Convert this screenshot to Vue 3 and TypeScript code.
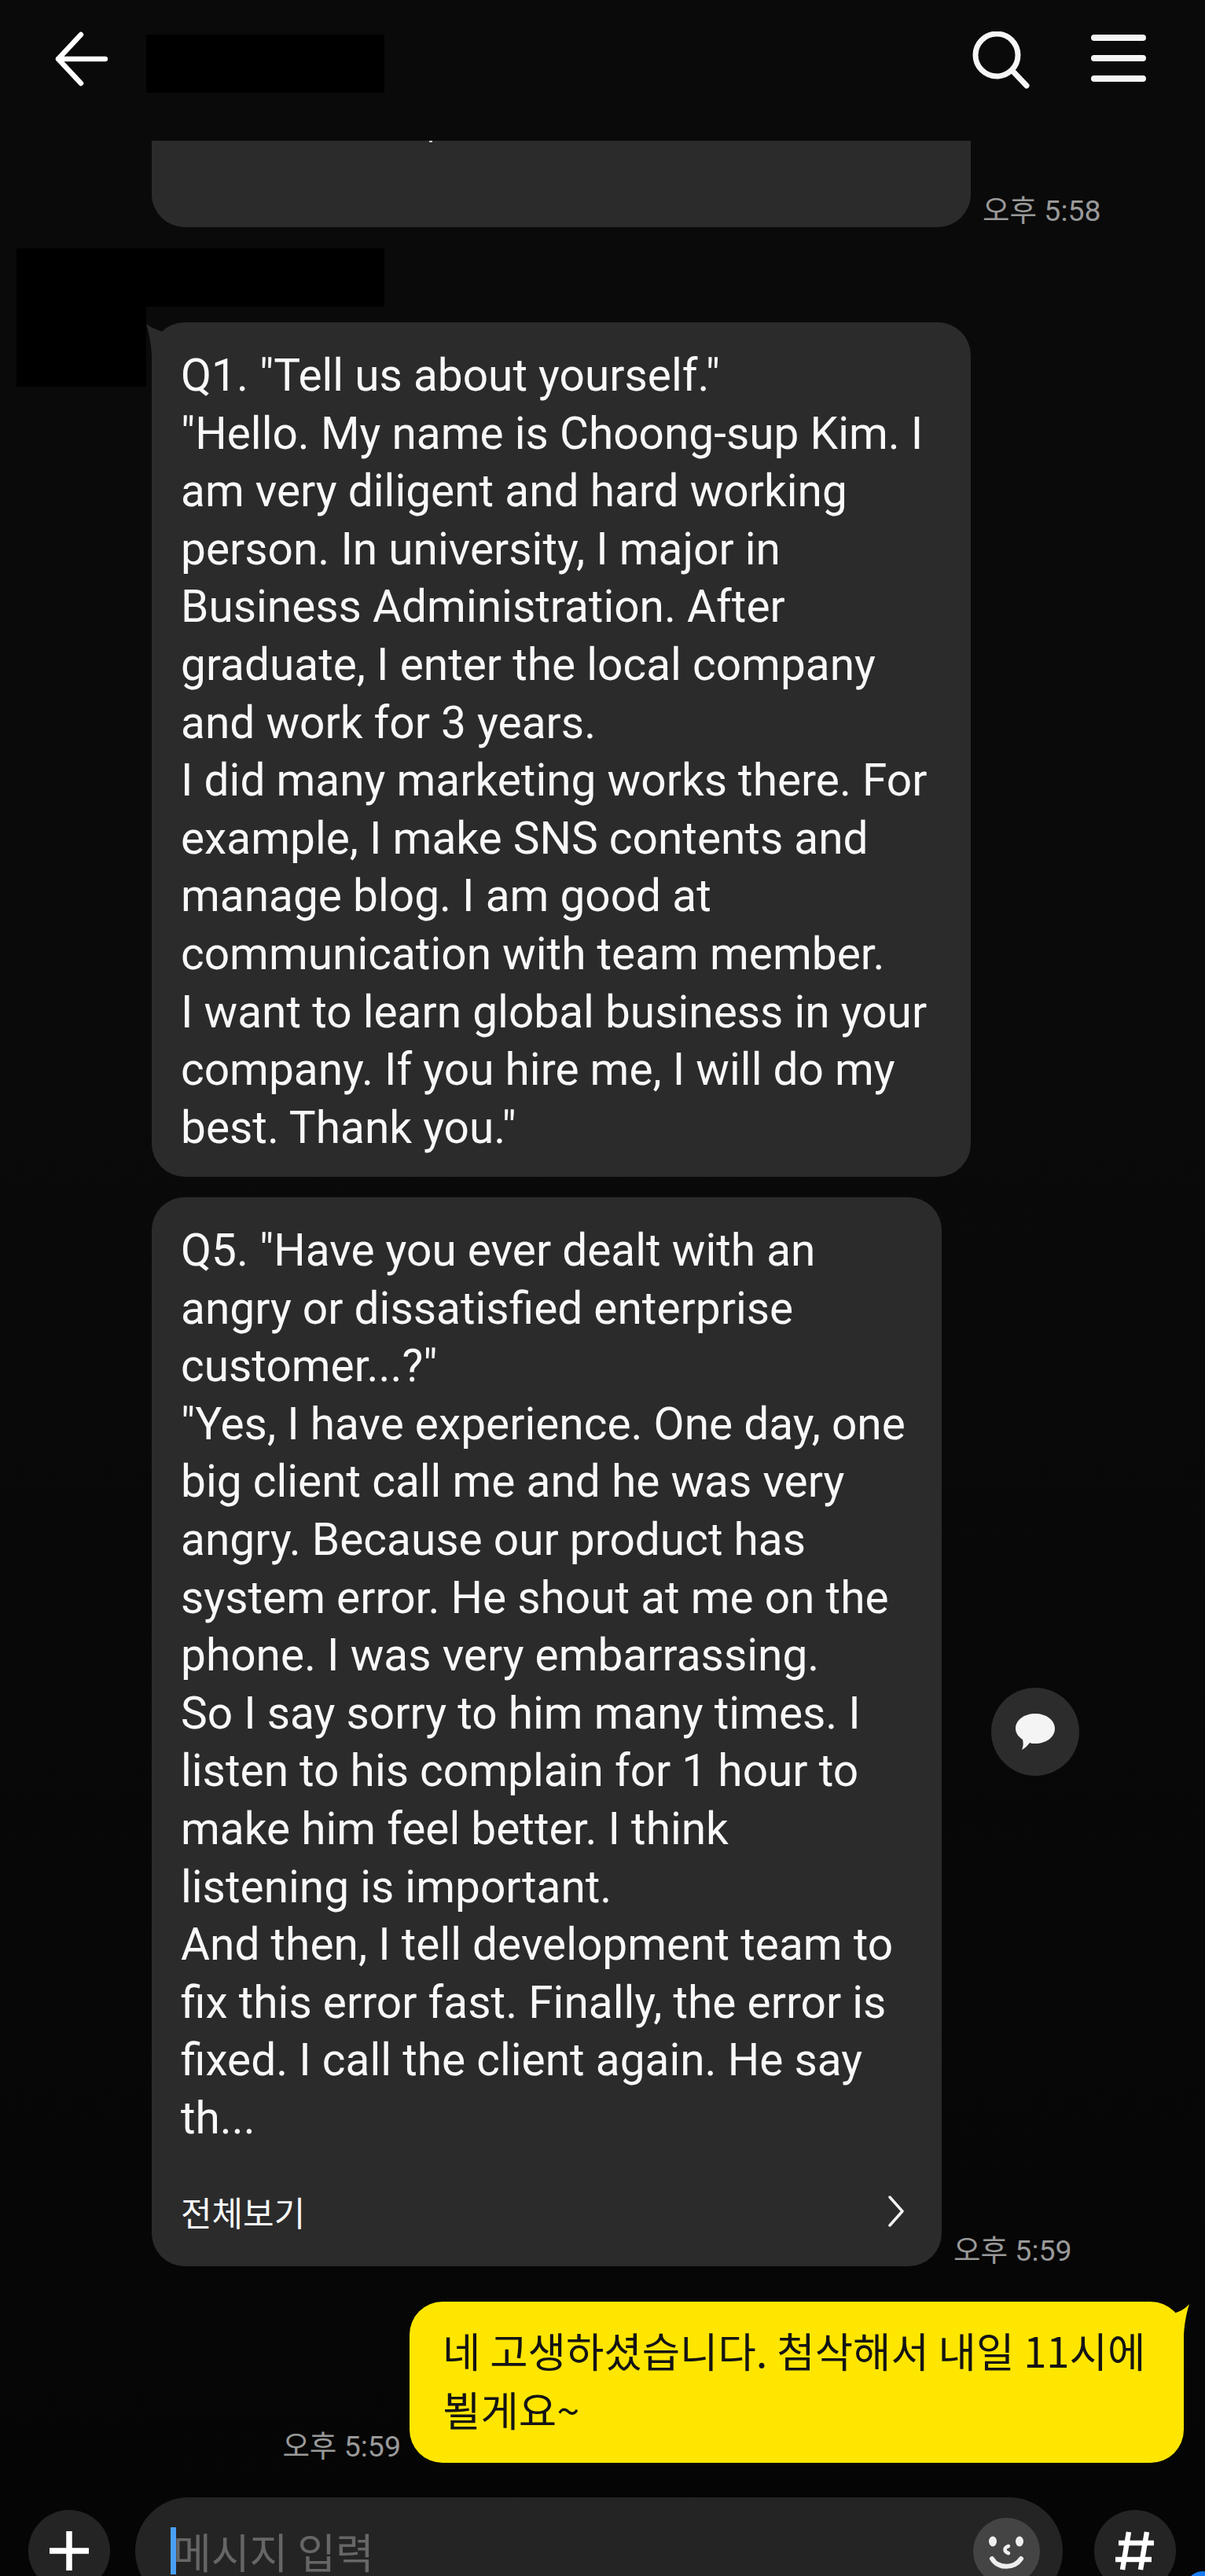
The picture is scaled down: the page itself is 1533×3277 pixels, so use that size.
<script setup lang="ts">
const firstAnswer = [
  'Q1. "Tell us about yourself."',
  '"Hello. My name is Choong-sup Kim. I',
  'am very diligent and hard working',
  'person. In university, I major in',
  'Business Administration. After',
  'graduate, I enter the local company',
  'and work for 3 years.',
  'I did many marketing works there. For',
  'example, I make SNS contents and',
  'manage blog. I am good at',
  'communication with team member.',
  'I want to learn global business in your',
  'company. If you hire me, I will do my',
  'best. Thank you."',
]

const secondAnswer = [
  'Q5. "Have you ever dealt with an',
  'angry or dissatisfied enterprise',
  'customer...?"',
  '"Yes, I have experience. One day, one',
  'big client call me and he was very',
  'angry. Because our product has',
  'system error. He shout at me on the',
  'phone. I was very embarrassing.',
  'So I say sorry to him many times. I',
  'listen to his complain for 1 hour to',
  'make him feel better. I think',
  'listening is important.',
  'And then, I tell development team to',
  'fix this error fast. Finally, the error is',
  'fixed. I call the client again. He say',
  'th...',
]

const myMessage = ['네 고생하셨습니다. 첨삭해서 내일 11시에', '뵐게요~']
</script>

<template>
  <div class="screen">
    <header class="topbar">
      <svg class="back" width="67" height="70" viewBox="0 0 67 70" fill="none" stroke="#fff" stroke-width="6.5" stroke-linecap="round" stroke-linejoin="round">
        <path d="M33 4 L4 35 L33 66 M4 35 H64" />
      </svg>
      <div class="redacted title-block"></div>
      <svg class="search" width="76" height="76" viewBox="0 0 76 76" fill="none" stroke="#f5f5f5" stroke-width="7" stroke-linecap="round">
        <circle cx="31" cy="30" r="27" />
        <path d="M51 50 L69 69" />
      </svg>
      <div class="menu"><span></span><span></span><span></span></div>
    </header>

    <main class="chat">
      <div class="row cut-row">
        <div class="bubble cut-bubble"><i class="speck"></i></div>
        <span class="time">오후 5:58</span>
      </div>

      <div class="sender">
        <div class="redacted avatar"></div>
        <div class="sender-body">
          <div class="redacted name"></div>
          <div class="row">
            <div class="bubble first">
              <svg class="tail" width="26" height="40" viewBox="0 0 26 40"><path d="M25 11 C17 9 8 6 0 0 C3 10 6 22 7 40 L25 40 Z" fill="#2b2b2b" /></svg>
              <div v-for="line in firstAnswer" :key="line" class="line">{{ line }}</div>
            </div>
          </div>
          <div class="row second-row">
            <div class="bubble second">
              <div v-for="line in secondAnswer" :key="line" class="line">{{ line }}</div>
              <div class="more">
                <span>전체보기</span>
                <svg width="22" height="42" viewBox="0 0 22 42" fill="none" stroke="#f2f2f2" stroke-width="3.5" stroke-linecap="round" stroke-linejoin="round">
                  <path d="M3 3 L19 21 L3 39" />
                </svg>
              </div>
            </div>
            <div class="side">
              <button class="share">
                <svg width="60" height="56" viewBox="0 0 60 56">
                  <path d="M30 5 C44 5 55 13 55 24 C55 35 44 43 30 43 C27 43 25 43 23 42 C20 46 17 49 13 51 C15 46 15 42 14 38 C8 34 5 29 5 24 C5 13 16 5 30 5 Z" fill="#f4f4f4" />
                </svg>
              </button>
              <span class="time">오후 5:59</span>
            </div>
          </div>
        </div>
      </div>

      <div class="row mine">
        <span class="time">오후 5:59</span>
        <div class="bubble yellow">
          <svg class="tail-right" width="24" height="40" viewBox="0 0 24 40"><path d="M0 13 C8 11 17 7 23 0 C20 10 17 22 16 40 L0 40 Z" fill="#ffe600" /></svg>
          <div v-for="line in myMessage" :key="line" class="line">{{ line }}</div>
        </div>
      </div>
    </main>

    <footer class="composer">
      <button class="round">
        <svg width="52" height="50" viewBox="0 0 52 50" stroke="#fff" stroke-width="7.5"><path d="M26 0 V50 M1 25 H51" /></svg>
      </button>
      <div class="input">
        <i class="caret"></i>
        <span class="placeholder">메시지 입력</span>
        <button class="emoji">
          <svg width="85" height="85" viewBox="0 0 85 85" fill="none">
            <ellipse cx="25" cy="30" rx="5" ry="6.5" fill="#eee" />
            <ellipse cx="59" cy="30" rx="5" ry="6.5" fill="#eee" />
            <path d="M45 36 C39 38 39 43 45 45" stroke="#eee" stroke-width="4.5" stroke-linecap="round" />
            <path d="M24 52 C32 65 52 65 61 52" stroke="#eee" stroke-width="6" stroke-linecap="round" />
          </svg>
        </button>
      </div>
      <button class="round hash">
        <svg width="52" height="50" viewBox="0 0 52 50" stroke="#fff" stroke-width="6.5" fill="none"><path d="M18 1 L10 49 M41 1 L33 49 M5 15 H50 M1 36 H47" /></svg>
      </button>
    </footer>
    <i class="corner"></i>
  </div>
</template>

<style scoped>
.screen {
  position: relative;
  width: 1533px;
  height: 3277px;
  overflow: hidden;
  display: flex;
  flex-direction: column;
  background: linear-gradient(#0a0a0a 0%, #0a0a0a 40%, #050505 100%);
  color: #f8f8f8;
  font-family: Roboto, "Noto Sans CJK KR", sans-serif;
}

.redacted {
  background: #000;
}

/* top bar */
.topbar {
  height: 179px;
  flex: none;
  display: flex;
  align-items: flex-start;
  box-sizing: border-box;
  padding: 40px 75px 0 70px;
}

.back {
  margin-right: 49px;
}

.title-block {
  width: 303px;
  height: 74px;
  margin-top: 4px;
}

.search {
  margin-left: auto;
  margin-right: 75px;
}

.menu {
  width: 70px;
  padding-top: 4px;
  display: flex;
  flex-direction: column;
  gap: 18px;
}

.menu span {
  height: 8px;
  border-radius: 4px;
  background: #f5f5f5;
}

/* messages */
.chat {
  flex: 1;
  display: flex;
  flex-direction: column;
}

.row {
  display: flex;
  align-items: flex-end;
}

.bubble {
  position: relative;
  box-sizing: border-box;
  background: #2b2b2b;
  border-radius: 42px;
}

.line {
  height: 73.6px;
  line-height: 73.6px;
  font-size: 56.8px;
  white-space: nowrap;
}

.time {
  font-family: Roboto, "Noto Sans CJK KR", sans-serif;
  font-size: 37.5px;
  line-height: 42px;
  color: #999;
  white-space: nowrap;
}

.cut-row {
  padding-left: 193px;
}

.cut-row .time {
  margin: 0 0 0 15px;
}

.cut-bubble {
  width: 1042px;
  height: 110px;
  border-radius: 0 0 42px 42px;
}

.speck {
  position: absolute;
  left: 353px;
  top: 0;
  width: 4px;
  height: 2px;
  background: #ccc;
}

.sender {
  display: flex;
  align-items: flex-start;
  margin-top: 27px;
  padding-left: 21px;
}

.avatar {
  width: 165px;
  height: 176px;
  flex: none;
}

.sender-body {
  display: flex;
  flex-direction: column;
}

.name {
  width: 303px;
  height: 74px;
  margin-bottom: 20px;
}

.sender-body .row {
  padding-left: 7px;
}

.first {
  width: 1042px;
  height: 1087px;
  padding: 31px 37px 0;
}

.tail {
  position: absolute;
  left: -7px;
  top: 2px;
}

.second-row {
  margin-top: 26px;
  align-items: stretch;
}

.second {
  width: 1005px;
  height: 1360px;
  padding: 31px 37px 0;
}

.more {
  display: flex;
  align-items: center;
  justify-content: space-between;
  margin-top: 53px;
  padding-right: 10px;
  font-family: "Noto Sans CJK KR", sans-serif;
  font-size: 43px;
  line-height: 56px;
}

.side {
  width: 180px;
  display: grid;
  grid-template-rows: 1fr auto 1fr;
  padding-left: 15px;
  box-sizing: border-box;
}

.side .time {
  grid-row: 3;
  align-self: end;
  margin-bottom: -1px;
}

.share {
  grid-row: 2;
  width: 112px;
  height: 112px;
  margin-left: 48px;
  padding: 0;
  border: none;
  border-radius: 50%;
  background: #2c2c2c;
  display: flex;
  align-items: center;
  justify-content: center;
}

.mine {
  justify-content: flex-end;
  margin-top: 45px;
  padding-right: 27px;
}

.mine .time {
  margin: 0 11px 0 0;
}

.yellow {
  width: 985px;
  height: 205px;
  padding: 24px 0 0 42px;
  background: #ffe600;
  color: #141414;
}

.yellow .line {
  height: 75px;
  line-height: 75px;
  font-family: "Noto Sans CJK KR", sans-serif;
  font-size: 52.6px;
}

.tail-right {
  position: absolute;
  right: -8px;
  top: 3px;
}

/* composer */
.composer {
  flex: none;
  height: 100px;
  display: flex;
  align-items: flex-start;
  gap: 32px;
  padding-left: 36px;
}

.composer button {
  padding: 0;
  border: none;
  display: flex;
  align-items: center;
  justify-content: center;
  flex: none;
}

.round {
  width: 104px;
  height: 104px;
  margin-top: 16px;
  border-radius: 50%;
  background: #242424;
}

.hash {
  margin-left: 8px;
}

.input {
  width: 1180px;
  height: 136px;
  flex: none;
  box-sizing: border-box;
  border-radius: 68px;
  background: #242424;
  display: flex;
  align-items: center;
  padding: 0 29px 0 45px;
}

.caret {
  width: 7px;
  height: 60px;
  flex: none;
  background: #4a9ff5;
}

.placeholder {
  font-family: "Noto Sans CJK KR", sans-serif;
  font-size: 53px;
  line-height: 56px;
  margin-left: -4px;
  color: #666;
}

.emoji {
  width: 85px;
  height: 85px;
  margin-left: auto;
  border-radius: 50%;
  background: #444;
}

.corner {
  position: absolute;
  right: -20px;
  bottom: -44px;
  width: 46px;
  height: 50px;
  border-radius: 50%;
  background: #1a7cf0;
}
</style>

<style>
body {
  background: #050505;
}
</style>
